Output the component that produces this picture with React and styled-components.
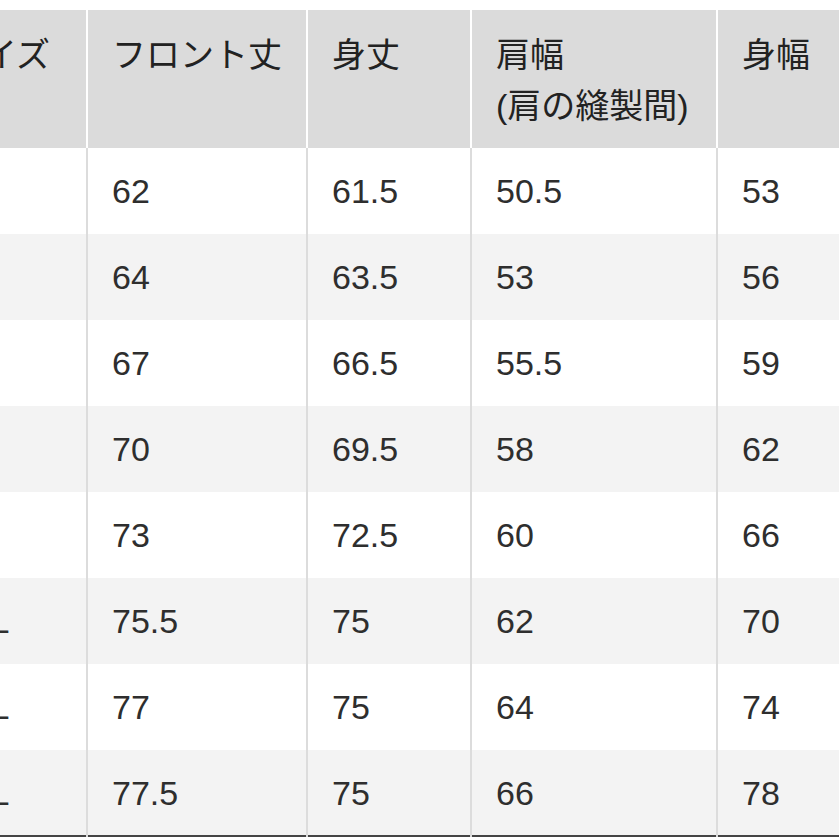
import React from 'react'
import styled, { createGlobalStyle } from 'styled-components'

const GlobalStyle = createGlobalStyle`
  html, body {
    margin: 0;
    padding: 0;
    background: #fff;
    overflow: hidden;
  }
  body {
    font-family: "Liberation Sans", "Noto Sans CJK JP", sans-serif;
  }
`;

const columns = [
  { key: 'size', label: ['サイズ'], width: 159 },
  { key: 'front', label: ['フロント丈'], width: 220 },
  { key: 'length', label: ['身丈'], width: 164 },
  { key: 'shoulder', label: ['肩幅', '(肩の縫製間)'], width: 246 },
  { key: 'chest', label: ['身幅'], width: 200 },
];

const rows = [
  ['XS', '62', '61.5', '50.5', '53'],
  ['S', '64', '63.5', '53', '56'],
  ['M', '67', '66.5', '55.5', '59'],
  ['L', '70', '69.5', '58', '62'],
  ['XL', '73', '72.5', '60', '66'],
  ['2XL', '75.5', '75', '62', '70'],
  ['3XL', '77', '75', '64', '74'],
  ['4XL', '77.5', '75', '66', '78'],
];

function SizeTable() {
  return (
    <TableWrap>
      <Table>
        <colgroup>
          {columns.map((c) => (
            <col key={c.key} style={{ width: c.width }} />
          ))}
        </colgroup>
        <thead>
          <tr>
            {columns.map((c) => (
              <HeadCell key={c.key}>
                {c.label.map((l) => (
                  <div key={l}>{l}</div>
                ))}
              </HeadCell>
            ))}
          </tr>
        </thead>
        <tbody>
          {rows.map((r, i) => (
            <Row key={r[0]} $striped={i % 2 === 1}>
              {r.map((v, j) => (
                <Cell key={j}>{v}</Cell>
              ))}
            </Row>
          ))}
        </tbody>
      </Table>
    </TableWrap>
  )
}

const TableWrap = styled.div`
  padding-top: 10px;
  margin-left: -72px;
  width: 1100px;
`;

const Table = styled.table`
  border-collapse: collapse;
  table-layout: fixed;
  width: 989px;
  color: #2e2e2e;
  font-size: 34px;
  border-bottom: 2px solid #444;
`;

const HeadCell = styled.th`
  height: 138px;
  box-sizing: border-box;
  padding: 20px 0 0 24px;
  vertical-align: top;
  text-align: left;
  font-weight: normal;
  line-height: 1.5;
  background: #dbdbdb;
  color: #222;
  border-left: 2px solid #fff;
  &:first-child {
    border-left: none;
    padding-left: 21px;
  }
`;

const Row = styled.tr`
  background: ${(p) => (p.$striped ? '#f3f3f3' : '#fff')};
`;

const Cell = styled.td`
  height: 86px;
  box-sizing: border-box;
  padding: 0 0 0 24px;
  vertical-align: middle;
  line-height: 1;
  border-left: 2px solid #dcdcdc;
  &:first-child {
    border-left: none;
    padding-left: 21px;
  }
`;

export default function App() {
  return (
    <>
      <GlobalStyle />
      <SizeTable />
    </>
  )
}
